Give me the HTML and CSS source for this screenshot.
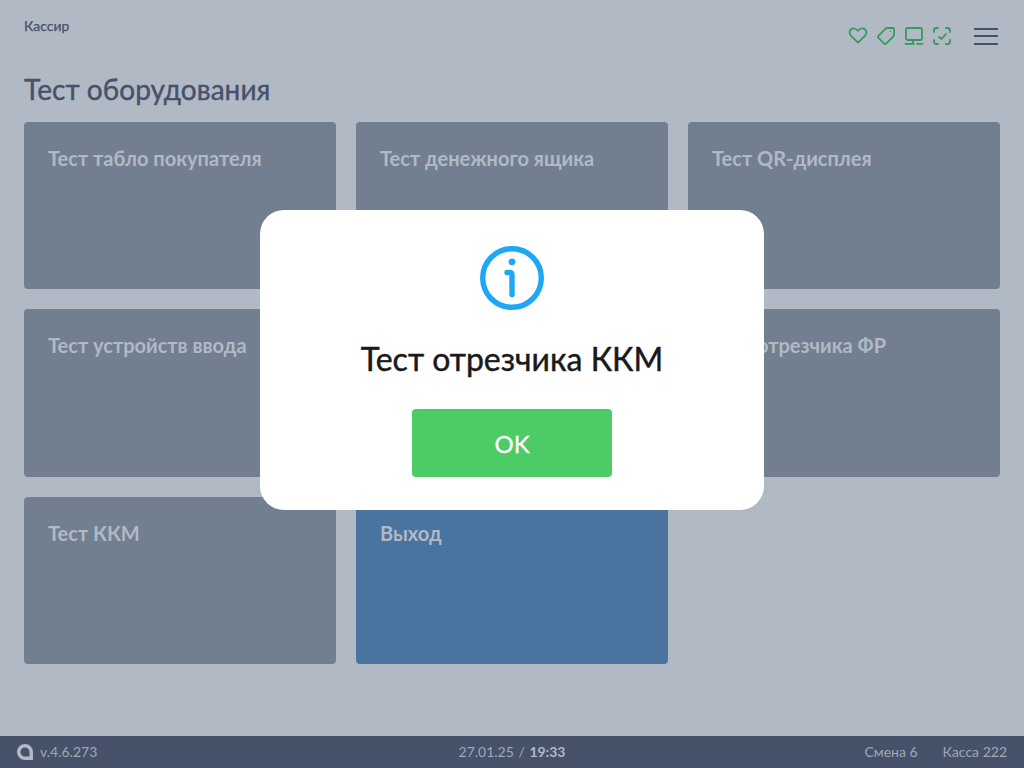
FILE: index.html
```html
<!DOCTYPE html>
<html lang="ru">
<head>
<meta charset="utf-8">
<title>Тест оборудования</title>
<link rel="stylesheet" href="styles.css">
</head>
<body>
<div class="page">
  <header class="header">
    <div class="role">Кассир</div>
    <div class="status">
      <svg class="icon" viewBox="0 0 20 20"><path d="M10 16.700 3 9.800C1 7.700 1.200 4.800 3 3.300c1.900-1.500 4.900-1.100 7 1.500 2.100-2.600 5.100-3 7-1.500 1.800 1.500 2 4.400 0 6.500z"/></svg>
      <svg class="icon" viewBox="0 0 20 20"><path d="M11 2h6a1 1 0 0 1 1 1v6a2 2 0 0 1-.6 1.400l-7.200 7.200a1.500 1.500 0 0 1-2.100 0l-5.700-5.700a1.500 1.500 0 0 1 0-2.100l7.200-7.200A2 2 0 0 1 11 2z"/><circle class="dot" cx="14.500" cy="5.500" r=".7"/></svg>
      <svg class="icon" viewBox="0 0 20 20"><rect x="2" y="2" width="16" height="12" rx="1.500"/><path d="M9 14v3.500M1.500 17.800H10M13 17.800h5.500"/></svg>
      <svg class="icon" viewBox="0 0 20 20"><path d="M6 2H4.500A2.500 2.500 0 0 0 2 4.500V6M14 2h1.500A2.500 2.500 0 0 1 18 4.500V6M2 14v1.500A2.500 2.500 0 0 0 4.500 18H6M18 14v1.500a2.500 2.500 0 0 1-2.500 2.500H14M7 11l2.500 2L14 8"/></svg>
      <button class="menu" aria-label="Меню"><span></span><span></span><span></span></button>
    </div>
  </header>
  <main class="main">
    <h1 class="title">Тест оборудования</h1>
    <div class="grid">
      <div class="tile">Тест табло покупателя</div>
      <div class="tile">Тест денежного ящика</div>
      <div class="tile">Тест QR-дисплея</div>
      <div class="tile">Тест устройств ввода</div>
      <div class="tile">Тест отрезчика ККМ</div>
      <div class="tile">Тест отрезчика ФР</div>
      <div class="tile">Тест ККМ</div>
      <div class="tile tile-exit">Выход</div>
    </div>
  </main>
  <footer class="footer">
    <div class="version">
      <svg class="logo" viewBox="0 0 16 16"><path fill-rule="evenodd" d="M8 0a8 8 0 0 0 0 16h8V8a8 8 0 0 0-8-8zm0 3.500a4.500 4.500 0 0 1 4.500 4.500v4.500H8a4.500 4.500 0 0 1 0-9z"/></svg>
      <span>v.4.6.273</span>
    </div>
    <div class="datetime">27.01.25 <span class="sep">/</span> <b>19:33</b></div>
    <div class="shift"><span>Смена 6</span><span>Касса 222</span></div>
  </footer>
</div>
<div class="overlay">
  <div class="modal">
    <svg class="info" viewBox="0 0 64 64">
      <circle class="info-ring" cx="32" cy="32" r="29.300"/>
      <circle class="info-dot" cx="32" cy="15.800" r="3.400"/>
      <path class="info-stem" d="M27 26.500h2.500q2.500 0 2.500 2.500v19.500"/>
    </svg>
    <div class="modal-text">Тест отрезчика ККМ</div>
    <button class="ok">OK</button>
  </div>
</div>
</body>
</html>
```
FILE: styles.css
```css
* { box-sizing: border-box; }
html, body { margin: 0; height: 100%; }
body {
  font-family: Lato, "Noto Sans", sans-serif;
  background: #b1b9c5;
  overflow: hidden;
  position: relative;
}
.page { display: flex; flex-direction: column; height: 768px; }
.header {
  height: 73px;
  padding: 17px 26px 0 24px;
  display: flex;
  justify-content: space-between;
  align-items: flex-start;
}
.role { font-size: 14px; line-height: 17px; color: #465269; font-weight: 400; -webkit-text-stroke: .25px #465269; }
.status { display: flex; align-items: center; gap: 8px; padding-top: 9px; }
.icon {
  width: 20px; height: 20px;
  fill: none; stroke: #359a5d; stroke-width: 1.800;
  stroke-linecap: round; stroke-linejoin: round;
}
.icon .dot { fill: #359a5d; stroke: none; }
.menu {
  width: 24px; height: 17px; margin-left: 14px; padding: 0; border: 0; background: none;
  display: flex; flex-direction: column; justify-content: space-between;
}
.menu span { display: block; height: 2px; background: #465269; }
.main { flex: 1; padding: 0 24px 72px; display: flex; flex-direction: column; min-height: 0; }
.title {
  margin: 0 0 17px; font-size: 28px; line-height: 32px; font-weight: 400; color: #465269;
  letter-spacing: .05px; -webkit-text-stroke: .4px #465269;
}
.grid {
  flex: 1;
  display: grid;
  grid-template-columns: repeat(3, 1fr);
  grid-template-rows: repeat(3, 1fr);
  gap: 20px;
}
.tile {
  background: #727f90;
  border-radius: 4px;
  padding: 23px 24px;
  font-size: 20px;
  line-height: 26px;
  font-weight: 700;
  color: #b1b9c5;
}
.tile-exit { background: #4a74a0; }
.footer {
  height: 32px;
  background: #465269;
  color: #9ea8b6;
  font-size: 14px;
  padding: 0 17px 1px;
  display: grid;
  grid-template-columns: 1fr auto 1fr;
  align-items: center;
}
.version { display: flex; align-items: center; gap: 7px; }
.logo { width: 16px; height: 16px; fill: #b1b9c5; }
.sep { margin: 0 1px; }
.datetime b { font-weight: 700; color: #b1b9c5; }
.shift { display: flex; justify-content: flex-end; gap: 25px; }
.overlay {
  position: absolute; left: 0; top: 0; width: 1024px; height: 768px;
  display: flex; align-items: center; justify-content: center;
  padding-bottom: 48.500px;
}
.modal {
  width: 504px; height: 299.500px;
  background: #fff; border-radius: 24px;
  display: flex; flex-direction: column; align-items: center;
  padding-top: 36px;
}
.info { width: 64px; height: 64px; }
.info-ring { fill: none; stroke: #1ea7f5; stroke-width: 5.400; }
.info-dot { fill: #1ea7f5; }
.info-stem { fill: none; stroke: #1ea7f5; stroke-width: 5.400; stroke-linecap: round; stroke-linejoin: round; }
.modal-text {
  margin-top: 29px; font-size: 32px; line-height: 40px; font-weight: 400; color: #1a1a1a;
  -webkit-text-stroke: .45px #1a1a1a;
}
.ok {
  margin-top: 30px; width: 200px; height: 68px; border: 0; border-radius: 4px;
  background: #4ccb66; color: #fff; font: 400 24px Lato, sans-serif;
  -webkit-text-stroke: .3px #fff;
}
```
